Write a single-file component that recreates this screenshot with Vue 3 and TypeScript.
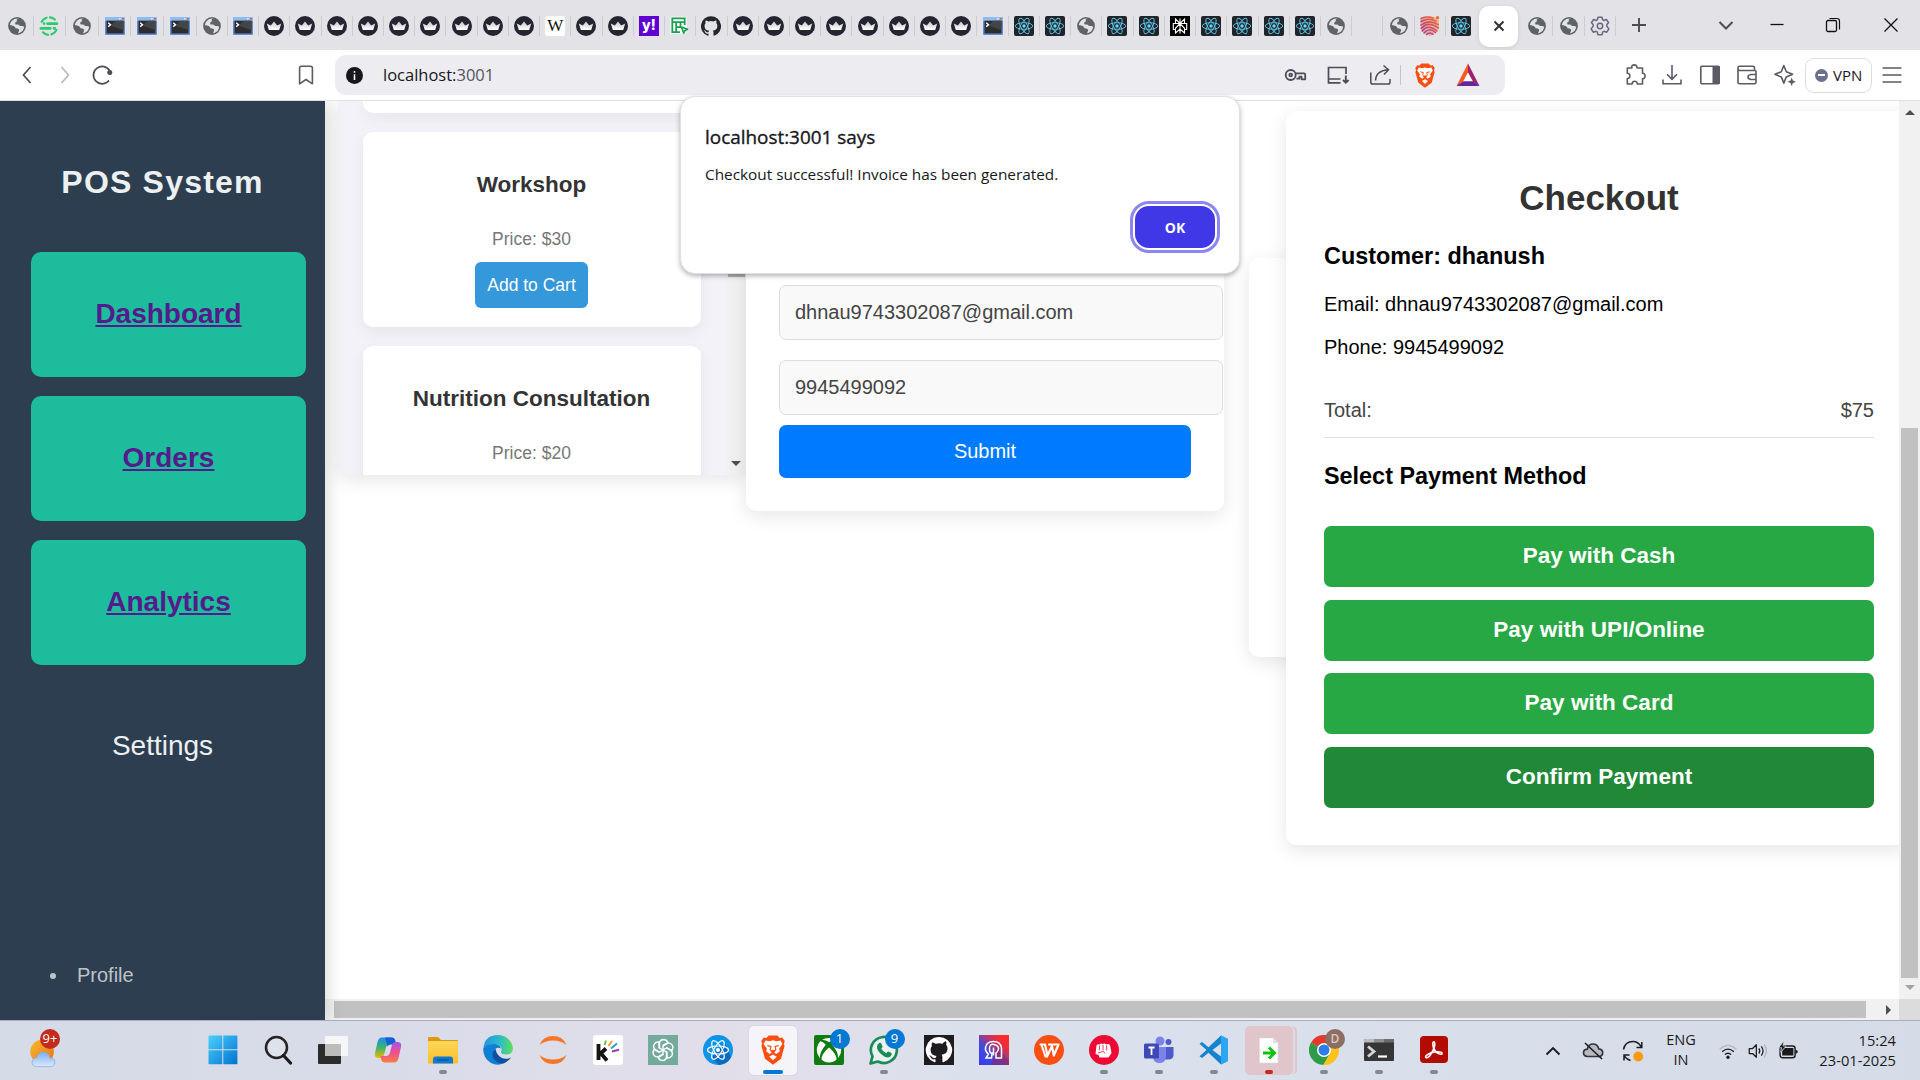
<script setup lang="ts">
type Tab = { icon: string; glyph?: string; active?: boolean; bare?: boolean; wide?: boolean }

const rep = (icon: string, n: number): Tab[] => Array.from({ length: n }, () => ({ icon }))

const tabs: Tab[] = [
  ...['globe', 'sync-green', 'globe', 'console', 'console', 'console'].map((icon) => ({ icon, wide: true })),
  { icon: 'globe' },
  { icon: 'console' },
  ...rep('crown', 9),
  { icon: 'wiki', glyph: 'W' },
  ...rep('crown', 2),
  { icon: 'yahoo', glyph: 'y!' },
  { icon: 'sheet' },
  { icon: 'github' },
  ...rep('crown', 8),
  { icon: 'console' },
  ...rep('react', 2),
  { icon: 'globe' },
  ...rep('react', 2),
  { icon: 'perplexity' },
  ...rep('react', 4),
  { icon: 'globe' },
  { icon: '' },
  { icon: 'globe' },
  { icon: 'finger' },
  { icon: 'react', bare: true },
  { icon: 'tab-close', active: true },
  { icon: 'globe' },
  { icon: 'globe' },
  { icon: 'gear' },
]

const navCards: string[] = ['Dashboard', 'Orders', 'Analytics']

const products = [
  { name: 'Workshop', price: 30, open: true },
  { name: 'Nutrition Consultation', price: 20, open: false },
]

const customer = { name: 'dhanush', email: 'dhnau9743302087@gmail.com', phone: '9945499092' }

const payments: string[] = ['Pay with Cash', 'Pay with UPI/Online', 'Pay with Card']

type TaskApp = { icon: string; dot?: string; badge?: string; state?: string }
const apps: TaskApp[] = [
  { icon: 'windows' },
  { icon: 'search' },
  { icon: 'taskview' },
  { icon: 'copilot' },
  { icon: 'explorer', dot: 'grey' },
  { icon: 'edge' },
  { icon: 'jupyter' },
  { icon: 'kite' },
  { icon: 'gpt' },
  { icon: 'react-blue' },
  { icon: 'brave', dot: 'blue', state: 'focused' },
  { icon: 'xbox', badge: '1' },
  { icon: 'whatsapp', badge: '9', dot: 'grey' },
  { icon: 'github-sq' },
  { icon: 'spiral' },
  { icon: 'wps' },
  { icon: 'fist', dot: 'grey' },
  { icon: 'teams', dot: 'grey' },
  { icon: 'vscode', dot: 'grey' },
  { icon: 'export', dot: 'red', state: 'alert' },
  { icon: 'chrome', dot: 'grey' },
  { icon: 'terminal', dot: 'grey' },
  { icon: 'acrobat', dot: 'grey' },
]
</script>

<template>
  <div class="screen">
    <svg class="sprite" aria-hidden="true">
      <defs>
        <linearGradient id="g-win" x1="0" y1="0" x2="1" y2="1"><stop offset="0" stop-color="#4cd0fb" /><stop offset="1" stop-color="#0072d0" /></linearGradient>
        <linearGradient id="g-cop1" x1="0" y1="0" x2="0" y2="1"><stop offset="0" stop-color="#1a8fe8" /><stop offset=".5" stop-color="#3fb36b" /><stop offset="1" stop-color="#f5b800" /></linearGradient>
        <linearGradient id="g-cop2" x1="0" y1="0" x2="0" y2="1"><stop offset="0" stop-color="#a455ee" /><stop offset=".5" stop-color="#ee4f8d" /><stop offset="1" stop-color="#fb7c43" /></linearGradient>
        <linearGradient id="g-edge" x1="0" y1="0" x2="1" y2="0"><stop offset="0" stop-color="#2393dd" /><stop offset=".55" stop-color="#2bbcc8" /><stop offset="1" stop-color="#5fe05a" /></linearGradient>
        <linearGradient id="g-spiral" x1="0" y1="1" x2="1" y2="0"><stop offset="0" stop-color="#3a37f0" /><stop offset=".35" stop-color="#3f4be0" /><stop offset=".75" stop-color="#f22c35" /><stop offset="1" stop-color="#ff2a2a" /></linearGradient>
        <linearGradient id="g-sun" x1="0" y1="0" x2="1" y2="1"><stop offset="0" stop-color="#f6bb2c" /><stop offset="1" stop-color="#ee6f1c" /></linearGradient>
        <linearGradient id="g-cloud" x1="0" y1="0" x2="0" y2="1"><stop offset="0" stop-color="#7fb0f5" /><stop offset="1" stop-color="#dbe9fc" /></linearGradient>
        <linearGradient id="g-folder" x1="0" y1="0" x2="0" y2="1"><stop offset="0" stop-color="#ffd75e" /><stop offset="1" stop-color="#fbbe27" /></linearGradient>
        <linearGradient id="g-finger" x1="0" y1="1" x2="1" y2="0"><stop offset="0" stop-color="#a8357f" /><stop offset="1" stop-color="#fb6a2a" /></linearGradient>
        <linearGradient id="g-crown" x1="0" y1="0" x2="0" y2="1"><stop offset="0" stop-color="#c9c9cd" /><stop offset="1" stop-color="#fff" /></linearGradient>
      </defs>

      <!-- tab favicons, 20 × 20 -->
      <symbol id="globe" viewBox="0 0 20 20">
        <circle cx="10" cy="10" r="8.9" fill="#5f6368" />
        <path d="M11.500 2.800c-2.300-.4-2.300 1.800-1 2.300-1.600.7-2.300 1-2.300 2.300 0 1.100 1.300 1.300 2.700 1.100 1.300 0 1.500 1.500 2.600 1.600 1.200.2 2.300-.2 3.600.7-.2 3.300-2.900 6.300-6 6.400 .1-1.500 1.400-2.100 1-3.400-.5-1.500-2.700-1.300-4.600-1.600C5.500 11.900 4.300 10.500 2.900 8.900 3.500 5.700 7.300 1.700 11.500 2.800z" fill="#e3e2e7" />
        <path d="M3 9.300c1.800.1 3.600.4 4.800 1.600 1.200 1 .4 2.200.6 3.500 .1 1-.1 1.700-.3 2.300C5 16 2.800 12.800 3 9.300z" fill="#5f6368" />
      </symbol>
      <symbol id="sync-green" viewBox="0 0 20 20">
        <g fill="none" stroke="#2bcb6c" stroke-width="2.200" stroke-linecap="round">
          <path d="M2.700 5.700A8.600 8.600 0 0 1 7.500 1.700M11 1.300a8.600 8.600 0 0 1 4.800 2.200M4 16.300a8.600 8.600 0 0 0 5 2.500M12.500 18.400a8.600 8.600 0 0 0 5-4.500" />
          <path d="M8.500 7.600h9.500M1.800 12.400h9.500M5 7.600h.1M15 12.400h.8" stroke-width="2.600" />
        </g>
      </symbol>
      <symbol id="console" viewBox="0 0 20 20">
        <rect x="0" y="1" width="20" height="18" rx="1" fill="#5b8fd6" />
        <rect x="0" y="1" width="20" height="3.800" fill="#8fbcf0" />
        <rect x="1.500" y="4.700" width="17" height="12.800" fill="#2c2d2e" />
        <path d="M10 4.700h8.500V14L6 10z" fill="#444546" />
        <path d="M3.200 6.800l2.300 1.900-2.300 1.900" fill="none" stroke="#fff" stroke-width="1.400" />
        <rect x="17" y="2" width="1.800" height="1.600" fill="#d95b4b" /><rect x="14" y="2" width="1.500" height="1.500" fill="#dcebff" />
      </symbol>
      <symbol id="crown" viewBox="0 0 20 20">
        <circle cx="10" cy="10" r="10" fill="#242530" />
        <path d="M2.800 7.500l4 2L10 5.400l3.200 4.100 4-2-2 6.600H4.800z" fill="url(#g-crown)" />
      </symbol>
      <symbol id="sheet" viewBox="0 0 20 20">
        <rect x=".5" y=".8" width="16" height="17" rx="1.500" fill="#fff" />
        <path d="M10 16.200H2.300V2.300h12.400V9M2.500 6.200h12M6.200 6.500V16M6.500 11.200H11M10.500 6.500v5" fill="none" stroke="#1ba051" stroke-width="1.800" />
        <path d="M11.500 11l6 2.300-2.500 1.200-1.200 2.700z" fill="#e8fff0" stroke="#1ba051" stroke-width="1.700" stroke-linejoin="round" />
      </symbol>
      <symbol id="github" viewBox="0 0 24 24">
        <path fill="#24262b" d="M12 .3a12 12 0 0 0-3.800 23.400c.6.1.8-.3.800-.6v-2c-3.300.7-4-1.600-4-1.600-.6-1.400-1.400-1.800-1.400-1.800-1-.7.100-.7.100-.7 1.200 0 1.900 1.200 1.900 1.200 1 1.800 2.800 1.300 3.500 1 0-.8.400-1.300.7-1.600-2.700-.3-5.500-1.300-5.500-6 0-1.200.5-2.300 1.300-3.100-.2-.4-.6-1.600 0-3.200 0 0 1-.3 3.400 1.200a11.500 11.500 0 0 1 6 0c2.300-1.500 3.300-1.200 3.300-1.200.6 1.600.2 2.800 0 3.200.9.800 1.300 1.900 1.300 3.200 0 4.600-2.800 5.600-5.500 5.900.5.400.9 1 .9 2.200v3.300c0 .3.100.7.800.6A12 12 0 0 0 12 .3" />
      </symbol>
      <symbol id="react" viewBox="0 0 20 20">
        <rect width="20" height="20" rx="2" fill="#20232a" />
        <g fill="none" stroke="#5fc8e4" stroke-width=".9">
          <ellipse cx="10" cy="10" rx="8.700" ry="3.300" /><ellipse cx="10" cy="10" rx="8.700" ry="3.300" transform="rotate(60 10 10)" /><ellipse cx="10" cy="10" rx="8.700" ry="3.300" transform="rotate(120 10 10)" />
        </g>
        <circle cx="10" cy="10" r="1.700" fill="#61dafb" />
      </symbol>
      <symbol id="perplexity" viewBox="0 0 20 20">
        <rect width="20" height="20" fill="#000" />
        <path d="M10 2.500v15M5.500 3l4.500 4.500L14.500 3v4.500h-9zM5.500 7.500H3.300v6h2.200M14.500 7.500h2.200v6h-2.200M10 7.500l-4.500 4.800v4.700l4.500-4 4.500 4v-4.700z" fill="none" stroke="#fff" stroke-width="1.100" />
      </symbol>
      <symbol id="finger" viewBox="0 0 20 20">
        <path d="M.5 2.500Q7-.5 14 1l5 3.500v7Q18 17 10 20 1 16.500.5 10z" fill="url(#g-finger)" fill-opacity=".35" />
        <g fill="none" stroke="url(#g-finger)" stroke-width="1.500" stroke-linecap="round">
          <path d="M1 2.500q6.500-2.500 12-.5M1 5.500q8-4.500 15-.3M1 9q8-6 17-.5M1.200 12.500Q8 4.500 18.500 12M2.200 15q6-7.500 14.800 0M4 17q5-6 11.500-.5M6.500 18.500q3-3 6.500-.2" />
        </g>
        <circle cx="17.500" cy="1.800" r="1.800" fill="#fb6a2a" />
      </symbol>
      <symbol id="gear" viewBox="0 0 20 20">
        <g fill="none" stroke="#676883" stroke-width="1.500" stroke-linejoin="round">
          <path d="M8 1.200h4l.6 2.500 1.400.8 2.400-1 2.200 3.100-1.700 2v1.800l2 2.500-2.300 3.300-2.600-.9-1.400.8-.6 2.700H8l-.6-2.700-1.400-.8-2.600.9-2.300-3.300 2-2.500V8.600l-1.700-2 2.200-3.100 2.400 1 1.400-.8z" />
          <circle cx="10" cy="10" r="2.700" />
        </g>
      </symbol>
      <symbol id="tab-close" viewBox="0 0 20 20"><path d="M5.500 5.500l9 9M14.500 5.500l-9 9" stroke="#2f3035" stroke-width="2" /></symbol>

      <!-- toolbar glyphs, 24 × 24 -->
      <symbol id="back" viewBox="0 0 24 24"><path d="M15.500 4L8.500 12l7 8" fill="none" stroke="#4b4c55" stroke-width="1.700" /></symbol>
      <symbol id="forward" viewBox="0 0 24 24"><path d="M8.500 4l7 8-7 8" fill="none" stroke="#b9b9bf" stroke-width="1.700" /></symbol>
      <symbol id="reload" viewBox="0 0 24 24"><path d="M18 17.500A8.700 8.700 0 1 1 18.800 8" fill="none" stroke="#4b4c55" stroke-width="1.700" /><circle cx="18.800" cy="9.500" r="2.500" fill="#4b4c55" /></symbol>
      <symbol id="bookmark" viewBox="0 0 24 24"><path d="M5.600 20.800V5q0-1.800 1.800-1.800h9.200q1.800 0 1.800 1.800v15.800L12 16.500z" fill="none" stroke="#5a5b64" stroke-width="1.600" stroke-linejoin="round" /></symbol>
      <symbol id="info" viewBox="0 0 24 24"><circle cx="12" cy="12" r="12" fill="#17171c" /><path d="M12 10.300v8M12 5.500v2.500" stroke="#fff" stroke-width="2.200" /></symbol>
      <symbol id="key" viewBox="0 0 24 24">
        <g fill="none" stroke="#4b4c55" stroke-width="1.800"><circle cx="6.700" cy="12" r="5" /><circle cx="6.700" cy="12" r="1.400" /><path d="M11.500 10.300H20q1.200 0 1.200 1.200v4.800h-3.600v-2.600h-2.200v2h-3" stroke-linejoin="round" /></g>
      </symbol>
      <symbol id="install" viewBox="0 0 24 24">
        <path d="M20 11V4.500H2.500v15.300h12M2.500 16h12" fill="none" stroke="#4b4c55" stroke-width="1.700" /><path d="M19.800 12.500v7M17 17l2.800 2.700 2.800-2.700" fill="none" stroke="#4b4c55" stroke-width="1.900" />
      </symbol>
      <symbol id="share" viewBox="0 0 24 24">
        <path d="M2.800 9.500v9.700q0 1.800 1.800 1.800h15.600q1.800 0 1.800-1.800V16" fill="none" stroke="#4b4c55" stroke-width="1.500" /><path d="M7.500 17.500Q8 8 19.500 6.800M15.500 2.500l5 4.300-4.500 4.800" fill="none" stroke="#4b4c55" stroke-width="1.500" />
      </symbol>
      <symbol id="brave" viewBox="0 0 30 34">
        <path d="M10 .5h10l2.500 2.800 3-.4 2.800 4-1 3 .8 2.500-4 14.500L15 33.800 5.900 26.900l-4-14.500.8-2.500-1-3 2.800-4 3 .4z" fill="#fb4e12" />
        <path d="M6.500 6.200l4.300.9L15 6l4.200 1.100 4.300-.9 2.200 4-3.800 5 .9 3.200-4 3-2.300-1.600 1.500-1.900-3-1.200-3 1.200 1.500 1.900-2.300 1.600-4-3 .9-3.200-3.800-5z" fill="#fff" />
        <path d="M15 22l4.200 2.600L15 28.500l-4.200-3.900z" fill="#fff" />
        <path d="M8.500 12l4.300 1-1 3.200 1.500 2M21.500 12l-4.300 1 1 3.200-1.500 2" fill="none" stroke="#fb4e12" stroke-width="1.300" />
      </symbol>
      <symbol id="bat" viewBox="0 0 24 24">
        <path d="M12 .5L.5 23 8 18.500 12 10z" fill="#fb5a1e" /><path d="M12 .5L23.500 23 16.500 18.500 12 10z" fill="#a02268" /><path d="M.5 23h23L16.500 18H8z" fill="#65259b" /><path d="M12 9.500L7.200 18.300h9.600z" fill="#fff" />
      </symbol>
      <symbol id="puzzle" viewBox="0 0 24 24">
        <path d="M4.300 5h4.600c-1.300-3.600 4.600-4.700 5.300 0h5.300v5.300c3.400-.4 3.400 6 0 5.500v5.200h-5.200c.2-3.600-5.100-3.600-5.200 0H4.300v-5.500c3.500.3 3.400-5.500 0-5.200z" fill="none" stroke="#5a5b64" stroke-width="1.600" stroke-linejoin="round" />
      </symbol>
      <symbol id="download" viewBox="0 0 24 24"><path d="M12 2v14M7 11.300l5 5 5-5M3 16.500v4.200h18V16.500" fill="none" stroke="#5a5b64" stroke-width="1.600" /></symbol>
      <symbol id="panel" viewBox="0 0 24 24"><rect x="2.800" y="3.300" width="18.400" height="17.400" rx="1" fill="none" stroke="#5a5b64" stroke-width="1.600" /><rect x="14.500" y="3" width="7" height="18" fill="#5a5b64" /></symbol>
      <symbol id="wallet" viewBox="0 0 24 24"><path d="M19.500 7.500V4.700q0-1.500-1.500-1.500H4.500Q3 3.200 3 4.700v14.500Q3 20.700 4.500 20.700h15q1.500 0 1.500-1.500V8.500q0-1-1.200-1H4.500Q3 7.300 3 5.800M21 11.500h-5q-3 .5-3 2.500t3 2.500h5" fill="none" stroke="#5a5b64" stroke-width="1.600" /></symbol>
      <symbol id="spark" viewBox="0 0 24 24"><path d="M10.800 2.500l2.500 6.200 6.300 2.600-6.300 2.600-2.500 6.200-2.500-6.200L2 11.300l6.300-2.600z" fill="none" stroke="#5a5b64" stroke-width="1.600" stroke-linejoin="round" /><path d="M18.700 14.500l1.200 3.100 3.100 1.200-3.100 1.200-1.200 3.100-1.200-3.100-3.100-1.200 3.100-1.200z" fill="#5a5b64" /></symbol>
      <symbol id="menu" viewBox="0 0 24 24"><path d="M2.500 5h19M2.500 12h19M2.500 19h19" stroke="#5a5b64" stroke-width="1.700" /></symbol>
      <symbol id="plus" viewBox="0 0 24 24"><path d="M12 5v14M5 12h14" stroke="#4b4c55" stroke-width="1.900" /></symbol>
      <symbol id="chev" viewBox="0 0 24 24"><path d="M5.500 9l6.500 6.500L18.500 9" fill="none" stroke="#4b4c55" stroke-width="2" /></symbol>
      <symbol id="minimize" viewBox="0 0 24 24"><path d="M5.500 11.500h13" stroke="#111" stroke-width="1.300" /></symbol>
      <symbol id="restore" viewBox="0 0 24 24"><rect x="5.500" y="7.500" width="10" height="11" rx="1.500" fill="none" stroke="#111" stroke-width="1.300" /><path d="M8.500 5.500h7.500q2.500 0 2.500 2.500v8.500" fill="none" stroke="#111" stroke-width="1.200" /></symbol>
      <symbol id="close" viewBox="0 0 24 24"><path d="M5.500 5.500l13 13M18.500 5.500l-13 13" stroke="#111" stroke-width="1.300" /></symbol>

      <!-- taskbar icons, 30 × 30 -->
      <symbol id="weather" viewBox="0 0 30 34">
        <circle cx="14" cy="16" r="13" fill="url(#g-sun)" />
        <path d="M8 32.500q-5.500-.5-5-5.500.5-4 5-4.300 1.500-6 7.500-6t7 6q5.500.3 5.500 5t-5 4.800z" fill="url(#g-cloud)" stroke="#7fa9ea" stroke-width=".8" />
      </symbol>
      <symbol id="windows" viewBox="0 0 30 30"><path d="M.5 1.500q0-.9.900-.9h12.900v13.600H.500zM15.300.6h13.200q.9 0 .9.900v12.700H15.300zM.500 15.300h13.800v14H1.400q-.9 0-.9-.9zM15.300 15.300h14.100v13.100q0 .9-.9.900H15.300z" fill="url(#g-win)" /></symbol>
      <symbol id="search" viewBox="0 0 30 30"><circle cx="13.500" cy="12.500" r="10.500" fill="#e3e6ee" fill-opacity=".6" stroke="#242424" stroke-width="2.500" /><path d="M20.500 20.500l7 7.500" stroke="#1b1b1b" stroke-width="3.200" stroke-linecap="round" /></symbol>
      <symbol id="taskview" viewBox="0 0 30 30"><rect x="0" y="9" width="23" height="20" rx="1" fill="#2c2c2c" /><rect x="7" y="1" width="23" height="20" rx="1" fill="#f6f6f6" /><rect x="7" y="9" width="16" height="12" fill="#bcbcbc" /></symbol>
      <symbol id="copilot" viewBox="0 0 30 30">
        <path d="M9 2.500h9q3 0 3.800 3L22.500 9H17q-3 0-4 3.500L11 20q-1 3-4 3H5q-4-.5-3-5L4.500 7Q5.500 2.500 9 2.500z" fill="url(#g-cop1)" />
        <path d="M12 2.500h7q2.500 0 3.300 3L23 9.500h-5q-2.500 0-3.500 2z" fill="#1560d4" />
        <path d="M21 27.500h-9q-3 0-3.800-3L7.500 21H13q3 0 4-3.500L19 10q1-3 4-3h2q4 .5 3 5l-2.500 11q-1 4.500-4.500 4.500z" fill="url(#g-cop2)" />
      </symbol>
      <symbol id="explorer" viewBox="0 0 30 30">
        <path d="M0 3q0-1 1-1h9l3 3h16q1 0 1 1v5H0z" fill="#dc9a08" /><rect y="6" width="30" height="22.500" rx="1" fill="url(#g-folder)" />
        <path d="M5 28.500v-4q0-3 3-3h14q3 0 3 3v4z" fill="#0f78d2" /><path d="M9 25h12" stroke="#0b4f94" stroke-width="1.200" />
      </symbol>
      <symbol id="edge" viewBox="0 0 30 30">
        <path d="M15 0a15 15 0 0 1 15 13q-.3 6.500-6.500 6.500-5.500 0-5.500-2.500 0-1 .8-2.200Q18.500 10 13 9 4.500 8.500.3 14.500 1 0 15 0z" fill="url(#g-edge)" />
        <path d="M.2 14Q4 8.500 12 9q5.500.8 6 4.800-2.600-2.300-5.500 0Q8.500 18 12 23.300q3.500 4.500 9.500 4.600Q14.500 31.500 8 28 .2 23.500.2 14z" fill="#0f7fd6" />
        <path d="M12.500 13.800Q7.500 18.500 11 24q4 5.500 10.500 4 4-1.700 6.500-5.500-5 2.500-9.500.3-5-2.600-6-9z" fill="#0b51a0" />
      </symbol>
      <symbol id="jupyter" viewBox="0 0 30 30"><path d="M1.500 10Q5 1 15 1t13.500 9Q23 5.500 15 5.500T1.500 10zM1.500 20Q5 29 15 29t13.500-9q-5.500 4.500-13.500 4.500T1.500 20z" fill="#f37726" /></symbol>
      <symbol id="kite" viewBox="0 0 30 30">
        <rect width="30" height="30" rx="3" fill="#fff" /><path d="M5.500 9v16M6 20l7-6.500M7.500 18l6.500 7.500" stroke="#151515" stroke-width="3.800" fill="none" />
        <path d="M11.500 10L13 5.500" stroke="#72bf44" stroke-width="2" /><path d="M15.500 11L19 6" stroke="#f5a623" stroke-width="2" /><path d="M18 13.500l6-5" stroke="#2d9cdb" stroke-width="2" /><path d="M19 16.500l7-1.800" stroke="#9b3ba5" stroke-width="2" />
      </symbol>
      <symbol id="gpt" viewBox="0 0 30 30">
        <rect width="30" height="30" fill="#74aa9c" />
        <g fill="none" stroke="#fff" stroke-width="1.400">
          <path v-for="n in 6" :key="n" :transform="`rotate(${n * 60} 15 15)`" d="M11.500 13V8.200Q12 4.500 15.700 4.500q3 .2 4.200 3L15 10.500v5.500" />
        </g>
      </symbol>
      <symbol id="react-blue" viewBox="0 0 30 30">
        <circle cx="15" cy="15" r="15" fill="#0b94e8" /><path d="M22 8l6 14.500A15 15 0 0 1 16 30L8 22z" fill="#0a6cc0" />
        <g fill="none" stroke="#fff" stroke-width="1.200"><ellipse cx="15" cy="15" rx="10.500" ry="4" /><ellipse cx="15" cy="15" rx="10.500" ry="4" transform="rotate(60 15 15)" /><ellipse cx="15" cy="15" rx="10.500" ry="4" transform="rotate(120 15 15)" /></g><circle cx="15" cy="15" r="2" fill="#fff" />
      </symbol>
      <symbol id="xbox" viewBox="0 0 30 30">
        <rect width="30" height="30" rx="2" fill="#107c10" />
        <path d="M15 3q4.500 0 7 2Q19 4.500 15 7 11 4.500 8 5q2.500-2 7-2z" fill="#fff" />
        <path d="M6.300 6.300Q9 6.500 11.800 9.800 5.500 17 6 23.200 2.800 19.500 2.800 15.500q0-5.500 3.500-9.200zM23.700 6.300Q21 6.500 18.200 9.800 24.500 17 24 23.200q3.200-3.700 3.200-7.700 0-5.500-3.500-9.200z" fill="#fff" />
        <path d="M15 12.500Q23 19.500 22.500 24.500 19.500 27.500 15 27.500t-7.500-3Q7 19.500 15 12.500z" fill="#fff" />
      </symbol>
      <symbol id="whatsapp" viewBox="0 0 30 30">
        <path d="M1.500 28.500l2-7.200A13 13 0 1 1 8.800 26.500z" fill="#e9f2ef" stroke="#1b8a57" stroke-width="2.700" stroke-linejoin="round" />
        <path d="M10.500 7.800q1.400-.4 2 1.200l1 2.500q.2.800-1.200 2.200 1.700 3.200 5 4.500 1.300-1.800 2-1.600l3 1.500q.8.500.2 2-1 2.200-3.500 2.300-3 0-7-3.500T8 12q0-3 2.500-4.200z" fill="#1b8a57" />
      </symbol>
      <symbol id="github-sq" viewBox="0 0 30 30">
        <rect width="30" height="30" fill="#1e1c1f" />
        <path fill="#fff" d="M15 2a13 13 0 0 0-4.500 25.300c.8.200 1-.3 1-.7v-2.300c-3.700.7-4.500-1.500-4.500-1.500-1-2-2-2.300-2-2.300 2-.5 3 1.300 3 1.300 1.200 2 3 1.400 3.700 1 .1-.9.500-1.500.9-1.800-3-.4-6-1.500-6-6.500 0-1.400.5-2.600 1.400-3.500-.2-.4-.6-1.700.1-3.500 0 0 1.100-.4 3.600 1.300a12.600 12.600 0 0 1 6.600 0C20.800 5.800 22 6.200 22 6.200c.7 1.800.2 3.100.1 3.500.8.900 1.400 2.100 1.400 3.500 0 5-3.100 6.100-6 6.500.5.400.9 1.200.9 2.400v4.500c0 .4.300.9 1 .7A13 13 0 0 0 15 2z" />
      </symbol>
      <symbol id="spiral" viewBox="0 0 30 30">
        <rect width="30" height="30" fill="url(#g-spiral)" /><path d="M18 12l12 14v4H12z" fill="#8c2560" fill-opacity=".6" />
        <path d="M12.500 23H7l2.500-4Q6 16.500 6.500 12.500 7.500 6.500 14.500 6.500T22.500 13v10H17v-5q2.500-1.500 2.500-4.500T15 9.500t-4.500 4 2.500 4.500zM14.500 12.500v8" fill="none" stroke="#fff" stroke-width="1.500" />
      </symbol>
      <symbol id="wps" viewBox="0 0 30 30"><circle cx="15" cy="15" r="15" fill="#fb4e14" /><path d="M6.500 9.500H11l2.500 11 4.500-9.500 1.800 9.500 4.700-11h-9.500" fill="none" stroke="#fff" stroke-width="2.200" stroke-linejoin="round" stroke-linecap="round" /><path d="M7.500 10l4 11.500h2.500" fill="none" stroke="#fff" stroke-width="2" /></symbol>
      <symbol id="fist" viewBox="0 0 30 30">
        <circle cx="15" cy="15" r="15" fill="#ed0a34" />
        <path d="M7.500 10.500q1.200-2 3-.8 1.200-2 3.300-.5 1.500-1.700 3.500.2 2-1.200 3.700.6L22.500 18l-3 4.500H10.500L9.500 20 6.500 19z" fill="#fff" />
        <path d="M10.700 10.500l-.5 5M14 10v5.500M17.500 10.500l.3 5M9 17.800l5.500-1.300 1.500 2" stroke="#ed0a34" stroke-width=".8" fill="none" />
      </symbol>
      <symbol id="teams" viewBox="0 0 30 30">
        <circle cx="24.500" cy="7" r="3" fill="#5059c9" /><path d="M20 12h9.500v8.500q-.5 4-5 4H20z" fill="#5059c9" /><circle cx="16" cy="6" r="4.500" fill="#7b83eb" /><path d="M9 12h13v10q-.5 6-6.500 6T9 22z" fill="#7b83eb" />
        <rect x="0" y="8.500" width="15" height="15" rx="1.500" fill="#3f48b4" /><path d="M4.500 12.500h6M7.500 12.500v7.500" stroke="#fff" stroke-width="1.800" />
      </symbol>
      <symbol id="vscode" viewBox="0 0 30 30"><path d="M22 .5L29 4v22l-7 3.500L9.500 17.700 3 23l-2.500-1.700L7.500 15 .5 8.700 3 7l6.500 5.300zM22 8.500L13.500 15l8.500 6.500z" fill="#1583cf" fill-rule="evenodd" /><path d="M22 .5L29 4v22l-7 3.500z" fill="#2aa6f2" /></symbol>
      <symbol id="export" viewBox="0 0 30 30"><path d="M5.500 3H19l5 5v20H5.500z" fill="#fff" stroke="#d9dce4" stroke-width=".6" /><path d="M19 3v5h5" fill="#dfe3e6" /><path d="M9 18h10M15 12.500l5.500 5.500-5.500 5.500" fill="none" stroke="#0ec30e" stroke-width="3" /></symbol>
      <symbol id="chrome" viewBox="0 0 30 30">
        <path d="M15 15L2 7.500A15 15 0 0 1 28 7.500z" fill="#e5392d" /><path d="M15 15L2 7.500A15 15 0 0 0 15 30l6-11.500z" fill="#2f9a48" /><path d="M15 15h0L28 7.500A15 15 0 0 1 14 30l7-11.500z" fill="#fcc31c" />
        <circle cx="15" cy="15" r="7" fill="#fff" /><circle cx="15" cy="15" r="5.500" fill="#2b7de9" />
      </symbol>
      <symbol id="terminal" viewBox="0 0 30 30"><rect y="4" width="30" height="22" rx="1" fill="#363636" /><path d="M0 5q0-1 1-1h9v3.500H0z" fill="#bbb" /><path d="M10 4h10v3.500H10z" fill="#8f8f8f" /><path d="M20 4h9q1 0 1 1v2.500H20z" fill="#6b6b6b" /><path d="M4 11.500l6 5-6 5" fill="none" stroke="#d6d6d6" stroke-width="2.800" /><path d="M14 21.500h9" stroke="#fff" stroke-width="2.200" /></symbol>
      <symbol id="acrobat" viewBox="0 0 30 30"><rect x="1" y="1" width="28" height="27" rx="4" fill="#b30b00" /><path d="M7 22.500q-1.500-1 2-3.200 3-1.800 7-2.300 6-.6 7 1 .3 2-3 .8-4-1.700-5.500-6Q13 7.500 14.500 7t1.200 3.500Q14.500 16 11 20.500 8.500 23.500 7 22.500z" fill="none" stroke="#fff" stroke-width="1.600" /></symbol>

      <!-- tray glyphs, 24 × 24 -->
      <symbol id="tray-up" viewBox="0 0 24 24"><path d="M5.500 15.500L12 9l6.500 6.500" fill="none" stroke="#1b1b1b" stroke-width="1.900" /></symbol>
      <symbol id="cloud-off" viewBox="0 0 24 24"><path d="M6.500 17.500q-4-.3-4-3.700t3.800-3.700Q7.500 5 12 5t5.700 4.800q4 .4 4 3.900t-4 3.800z" fill="#b7bac3" stroke="#33343a" stroke-width="1.700" /><path d="M4 4l17 16" stroke="#1b1b1b" stroke-width="1.600" /></symbol>
      <symbol id="sync" viewBox="0 0 24 24"><path d="M2.500 10.500Q4 2.500 12 2.500q5 0 8 5M20.800 3v5.500h-5.300M3 21.500V16H8.500M3.500 17q2 3.500 6 4.500" fill="none" stroke="#1b1b1b" stroke-width="1.500" /><circle cx="17.200" cy="17.500" r="5" fill="#fb9a0c" /></symbol>
      <symbol id="wifi" viewBox="0 0 24 24"><g fill="none" stroke-width="1.700"><path d="M2 10Q12 .5 22 10" stroke="#b4b6c0" /><path d="M5 13q7-6.500 14 0M8.200 16.200q3.800-3.200 7.600 0" stroke="#1b1b1b" /></g><circle cx="12" cy="19.500" r="2" fill="#1b1b1b" /></symbol>
      <symbol id="volume" viewBox="0 0 24 24"><path d="M1.500 9h4L10 4.500v15L5.500 15h-4z" fill="none" stroke="#1b1b1b" stroke-width="1.500" stroke-linejoin="round" /><path d="M13 9q2.300 3 0 6M16 6.500q4.200 5.500 0 11" fill="none" stroke="#1b1b1b" stroke-width="1.500" /><path d="M19.300 4q5.500 8 0 16" fill="none" stroke="#adb0bb" stroke-width="1.400" /></symbol>
      <symbol id="battery" viewBox="0 0 24 24"><rect x="2.500" y="6" width="18" height="14" rx="3" fill="none" stroke="#1b1b1b" stroke-width="1.700" /><path d="M5 12l3-3.500h10.500v9H5z" fill="#1b1b1b" /><path d="M21 10.500v5q2.800-.5 2.800-2.500T21 10.500z" fill="#1b1b1b" /><path d="M7 0L.8 8h3.500L3 13.500 9.800 6H6z" fill="#1b1b1b" stroke="#d8dce7" stroke-width=".8" /></symbol>
    </svg>

    <header class="tabstrip">
      <div v-for="(t, i) in tabs" :key="i" class="tab" :class="{ wide: t.wide, active: t.active, bare: t.bare }">
        <span class="tab-face">
          <span v-if="t.glyph" class="letter" :class="t.icon">{{ t.glyph }}</span>
          <svg v-else-if="t.icon" class="fav"><use :href="'#' + t.icon" /></svg>
        </span>
      </div>
      <svg class="ic plus"><use href="#plus" /></svg>
      <div class="win">
        <svg class="ic"><use href="#chev" /></svg>
        <svg class="ic"><use href="#minimize" /></svg>
        <svg class="ic"><use href="#restore" /></svg>
        <svg class="ic"><use href="#close" /></svg>
      </div>
    </header>

    <div class="toolbar">
      <div class="nav-left">
        <svg class="ic"><use href="#back" /></svg>
        <svg class="ic"><use href="#forward" /></svg>
        <svg class="ic"><use href="#reload" /></svg>
      </div>
      <svg class="ic mark"><use href="#bookmark" /></svg>
      <div class="address">
        <svg class="info"><use href="#info" /></svg>
        <span class="url">localhost:<i>3001</i></span>
        <div class="addr-icons">
          <svg class="ic"><use href="#key" /></svg>
          <svg class="ic"><use href="#install" /></svg>
          <svg class="ic"><use href="#share" /></svg>
        </div>
        <span class="bar"></span>
        <svg class="lion"><use href="#brave" /></svg>
        <svg class="ic bat"><use href="#bat" /></svg>
      </div>
      <div class="tools">
        <svg v-for="n in ['puzzle', 'download', 'panel', 'wallet', 'spark']" :key="n" class="ic"><use :href="'#' + n" /></svg>
      </div>
      <div class="vpn"><span class="vpn-dot"></span><span class="vpn-text">VPN</span></div>
      <svg class="ic menu"><use href="#menu" /></svg>
    </div>

    <div class="page">
      <aside class="sidebar">
        <h2 class="brand">POS System</h2>
        <nav class="nav">
          <div v-for="n in navCards" :key="n" class="nav-card"><a>{{ n }}</a></div>
        </nav>
        <div class="settings">Settings</div>
        <div class="profile"><span class="bullet"></span><span>Profile</span></div>
      </aside>

      <div class="scroller">
        <div class="row">
          <main class="board">
            <section class="products">
              <div class="product-list">
                <article class="product tail"></article>
                <article v-for="p in products" :key="p.name" class="product">
                  <h3>{{ p.name }}</h3>
                  <p>Price: ${{ p.price }}</p>
                  <button v-if="p.open">Add to Cart</button>
                </article>
              </div>
              <div class="mini-scroll"><span class="mini-thumb"></span><span class="tri down"></span></div>
            </section>

            <section class="form">
              <div class="field">{{ customer.email }}</div>
              <div class="field">{{ customer.phone }}</div>
              <button class="submit">Submit</button>
            </section>

            <section class="cart"></section>

            <section class="checkout">
              <h2>Checkout</h2>
              <h3>Customer: {{ customer.name }}</h3>
              <p class="email">Email: {{ customer.email }}</p>
              <p class="phone">Phone: {{ customer.phone }}</p>
              <div class="total"><span>Total:</span><span>$75</span></div>
              <h3 class="select">Select Payment Method</h3>
              <div class="pays">
                <button v-for="p in payments" :key="p">{{ p }}</button>
                <button class="confirm">Confirm Payment</button>
              </div>
            </section>
          </main>
          <div class="vbar">
            <span class="tri up"></span>
            <span class="vthumb"></span>
            <span class="tri down dim"></span>
          </div>
        </div>
        <div class="hbar"><span class="hthumb"></span><span class="tri right"></span><span class="corner"></span></div>
      </div>
    </div>

    <footer class="taskbar">
      <div class="weather"><svg class="w-ic"><use href="#weather" /></svg><span class="w-badge">9+</span></div>
      <div class="apps">
        <div v-for="a in apps" :key="a.icon" class="app">
          <div class="app-face" :class="a.state">
            <svg class="app-ic"><use :href="'#' + a.icon" /></svg>
            <span v-if="a.dot" class="dot" :class="a.dot"></span>
            <span v-if="a.badge" class="badge">{{ a.badge }}</span>
            <span v-if="a.icon === 'chrome'" class="badge user">D</span>
          </div>
        </div>
      </div>
      <div class="tray">
        <svg class="ic"><use href="#tray-up" /></svg>
        <svg class="ic cloud"><use href="#cloud-off" /></svg>
        <svg class="ic sync"><use href="#sync" /></svg>
        <div class="lang"><span>ENG</span><span>IN</span></div>
        <svg class="ts wifi"><use href="#wifi" /></svg>
        <svg class="ts"><use href="#volume" /></svg>
        <svg class="ts"><use href="#battery" /></svg>
        <div class="clock"><span class="time">15:24</span><span class="date">23-01-2025</span></div>
      </div>
    </footer>

    <div class="dialog">
      <div class="dlg-title">localhost:3001 says</div>
      <div class="dlg-msg">Checkout successful! Invoice has been generated.</div>
      <button class="ok">OK</button>
    </div>
  </div>
</template>

<style>
body { margin: 0; overflow: hidden; background: #fff; }
</style>

<style scoped>
* { box-sizing: border-box; }
h2, h3, p { margin: 0; }
button { border: 0; padding: 0; font-family: inherit; color: #fff; display: block; }
svg { display: block; flex: none; }
.sprite { position: absolute; width: 0; height: 0; }
.screen { width: 1920px; height: 1080px; position: relative; overflow: hidden; display: flex; flex-direction: column; font-family: "Liberation Sans", Arial, sans-serif; background: #fff; }
.ic { width: 24px; height: 24px; }

.tabstrip { height: 50px; flex: none; background: #e3e2e7; display: flex; align-items: center; padding-left: 1px; }
.tab { width: 31.240px; height: 50px; flex: none; display: flex; align-items: center; justify-content: center; background: linear-gradient(#cdccd2, #cdccd2) no-repeat right 16px / 1px 20px; padding: 2px 1px 0 0; }
.tab.wide { width: 32.600px; }
.tab.bare { background: none; }
.tab.active { width: 45px; background: none; }
.tab-face { display: flex; align-items: center; justify-content: center; }
.tab.active .tab-face { width: 39px; height: 41px; background: #fff; border-radius: 10px; margin-right: 1px; box-shadow: 0 1px 4px rgba(0, 0, 0, .1); }
.fav { width: 20px; height: 20px; }
.letter { width: 20px; height: 20px; line-height: 20px; text-align: center; white-space: nowrap; }
.letter.wiki { background: #fff; border-radius: 3px; font-family: "Liberation Serif", serif; font-size: 17px; color: #111; }
.letter.yahoo { background: #5f01d1; font-family: Inter, sans-serif; font-weight: 800; font-size: 14px; line-height: 18px; color: #fff; }
.plus { margin-left: 11px; }
.win { margin-left: auto; display: flex; padding-right: 17px; }
.win .ic { margin-left: 32px; }
.win .ic:nth-child(2) { margin-left: 27px; }
.win .ic:nth-child(4) { margin-left: 34px; }

.toolbar { height: 51px; flex: none; display: flex; align-items: center; border-bottom: 1px solid #e1e0e5; background: #fff; }
.nav-left { display: flex; gap: 14px; padding-left: 15px; }
.mark { margin-left: 179px; }
.address { margin-left: 17px; width: 1170px; height: 40px; border-radius: 11px; background: #edecf1; display: flex; align-items: center; flex: none; }
.info { width: 17px; height: 17px; margin-left: 11px; }
.url { margin-left: 20px; font: 16.500px/40px "Open Sans", "Noto Sans", sans-serif; color: #17171c; width: 130px; }
.url i { font-style: normal; color: #55555e; }
.addr-icons { margin-left: auto; display: flex; gap: 18px; }
.bar { width: 1px; height: 20px; background: #c4c3ca; margin-left: 8px; }
.lion { width: 22px; height: 27px; margin-left: 13px; }
.bat { margin-left: 20px; margin-right: 25px; }
.tools { display: flex; gap: 13.500px; margin-left: 117.500px; }
.vpn { width: 67px; height: 35px; border: 1px solid #dddce1; border-radius: 9px; margin-left: 8.500px; display: flex; align-items: center; }
.vpn-dot { width: 13px; height: 13px; border-radius: 50%; background: linear-gradient(#fff, #fff) center / 7px 2px no-repeat #6d6f8f; margin-left: 9px; }
.vpn-text { font: 15px/33px "Open Sans", "Noto Sans", sans-serif; color: #17171c; margin-left: 5px; }
.menu { margin-left: 8px; }

.page { height: 919px; flex: none; display: flex; }
.sidebar { width: 325px; flex: none; background: #2d3e50; display: flex; flex-direction: column; position: relative; z-index: 3; box-shadow: 4px 0 15px rgba(0, 0, 0, .13); clip-path: inset(0 -40px 0 0); }
.brand { margin-top: 61px; height: 40px; line-height: 40px; font-size: 32px; letter-spacing: 1.200px; text-align: center; color: #ecf0f1; }
.nav { margin: 50px 19px 0 31px; display: flex; flex-direction: column; gap: 19px; }
.nav-card { height: 125px; border-radius: 10px; background: #1cbc9c; display: flex; align-items: center; justify-content: center; padding-bottom: 2px; }
.nav-card a { font-size: 28px; font-weight: 700; color: #551a8b; text-decoration: underline; }
.settings { margin-top: 19px; height: 124px; line-height: 124px; font-size: 28px; text-align: center; color: #ecf0f1; }
.profile { margin-top: 155px; display: flex; align-items: center; height: 24px; padding-left: 50px; color: #bdc3c7; font-size: 20px; }
.bullet { width: 6px; height: 6px; border-radius: 50%; background: #bdc3c7; margin: 2px 21px 0 0; }

.scroller { width: 1595px; display: flex; flex-direction: column; }
.row { height: 898px; display: flex; }
.board { width: 1574px; height: 898px; flex: none; overflow: hidden; display: flex; align-items: flex-start; padding-left: 13px; background: #fff; }
.products { width: 408px; height: 374px; flex: none; border-radius: 0 0 0 10px; background: #f2f2f8; display: flex; overflow: hidden; box-shadow: 0 5px 19px rgba(0, 0, 0, .1); }
.product-list { width: 388px; height: 374px; overflow: hidden; padding: 0 25px; display: flex; flex-direction: column; }
.product { height: 195px; flex: none; margin-bottom: 19px; border-radius: 10px; background: #fff; box-shadow: 0 5px 15px rgba(0, 0, 0, .06); display: flex; flex-direction: column; align-items: center; padding-right: 1px; }
.product.tail { height: 12px; border-radius: 0 0 10px 10px; }
.product h3 { margin-top: 38px; height: 30px; line-height: 30px; font-size: 22.500px; color: #333; }
.product p { margin-top: 27px; height: 24px; line-height: 24px; font-size: 17.500px; color: #777; }
.product button { margin-top: 11px; width: 113px; height: 46px; border-radius: 6px; background: #3498db; font-size: 17.500px; }
.mini-scroll { width: 20px; background: #f1f1f1; display: flex; flex-direction: column; align-items: center; }
.mini-thumb { width: 17px; height: 176px; background: #b5b5b5; }
.mini-scroll .tri { margin-top: 184px; }

.form { width: 478px; height: 410px; flex: none; border-radius: 0 0 10px 10px; background: #fff; box-shadow: 0 5px 19px rgba(0, 0, 0, .1); padding: 184px 0 0 33px; z-index: 1; }
.field { width: 444px; height: 55px; border: 1px solid #ddd; border-radius: 7px; background: #f9f9f9; line-height: 53px; padding-left: 15px; font-size: 20px; color: #444; margin-bottom: 20px; }
.submit { width: 412px; height: 53px; margin-top: -10px; border-radius: 7px; background: #007bff; font-size: 20px; }
.cart { width: 200px; height: 399px; flex: none; margin: 157px 0 0 25px; border-radius: 10px; background: #fff; box-shadow: 0 5px 19px rgba(0, 0, 0, .1); }
.checkout { width: 625px; height: 734px; flex: none; margin: 10px 0 0 -163px; border-radius: 10px; background: #fff; box-shadow: 0 5px 19px rgba(0, 0, 0, .1); padding: 67px 37px 0 38px; z-index: 1; color: #000; }
.checkout h2 { height: 40px; line-height: 40px; font-size: 35px; text-align: center; color: #333; }
.checkout h3 { height: 30px; line-height: 30px; font-size: 23.400px; margin-top: 23px; }
.checkout p { font-size: 20px; line-height: 24px; }
.checkout .email { margin-top: 21px; }
.checkout .phone { margin-top: 19px; }
.total { margin-top: 39px; display: flex; justify-content: space-between; font-size: 20px; line-height: 24px; padding-bottom: 15px; border-bottom: 1px solid #ddd; color: #444; }
.pays { margin-top: 35px; display: flex; flex-direction: column; gap: 12.600px; }
.pays button { height: 61px; border-radius: 7px; background: #28a745; font-size: 22.500px; font-weight: 700; padding-bottom: 1px; }
.pays .confirm { background: #218838; }

.vbar { width: 21px; height: 898px; background: #f1f1f1; display: flex; flex-direction: column; align-items: center; }
.vbar .up { margin-top: 9px; }
.vthumb { margin-top: 313px; width: 17px; height: 550px; background: #c1c1c1; }
.vbar .down { margin-top: 7px; }
.tri { width: 0; height: 0; border: 5px solid transparent; flex: none; }
.tri.up { border-top: 0; border-bottom-color: #505050; }
.tri.down { border-bottom: 0; border-top-color: #505050; }
.tri.dim { border-top-color: #a3a3a3; }
.tri.right { border-right: 0; border-left-color: #505050; }
.hbar { height: 21px; background: #f1f1f1; display: flex; align-items: center; }
.hthumb { margin-left: 9px; width: 1532px; height: 17px; background: #c1c1c1; }
.hbar .tri { margin-left: 20px; }
.corner { width: 21px; height: 21px; background: #dcdcdc; margin-left: auto; }

.taskbar { height: 60px; flex: none; border-top: 1px solid #aaacb9; background: linear-gradient(90deg, #d6dbe8 0%, #d8dbe8 18%, #dfdeea 32%, #e2deea 40%, #dbe1ec 50%, #d9e0ec 68%, #d5dce8 100%); display: flex; align-items: center; font-family: "Open Sans", "Noto Sans", sans-serif; position: relative; z-index: 4; }
.weather { width: 32px; height: 40px; margin-left: 28px; position: relative; }
.w-ic { width: 30px; height: 31px; margin-top: 6px; }
.w-badge { position: absolute; left: 12px; top: -2px; width: 20px; height: 20px; border-radius: 50%; background: #c42b1c; color: #fff; font-size: 13px; line-height: 19px; text-align: center; }
.apps { display: flex; margin-left: 135.500px; }
.app { width: 55.050px; display: flex; justify-content: center; }
.app-face { width: 48px; height: 49px; border-radius: 5px; display: flex; flex-direction: column; align-items: center; position: relative; padding-top: 9px; }
.app-face.focused { background: rgba(255, 255, 255, .65); box-shadow: 0 0 0 1px rgba(0, 0, 0, .03); }
.app-face.alert { background: #e0c5cb; box-shadow: 3px 0 0 -1px #d8dce7, 5px 0 0 -1px #e0c5cb; }
.app-ic { width: 30px; height: 30px; }
.dot { width: 8px; height: 4px; border-radius: 2px; background: #85878f; margin-top: 5px; }
.dot.blue { width: 20px; background: #0078d4; }
.dot.red { background: #c42b1c; }
.badge { position: absolute; left: 25px; top: 3px; width: 20px; height: 20px; border-radius: 50%; background: #0078d4; color: #fff; font-size: 13px; line-height: 19px; text-align: center; }
.badge.user { background: #8d6e63; color: #d9c9c2; font-size: 12px; font-weight: 600; }
.tray { margin-left: auto; display: flex; align-items: center; padding-right: 24px; color: #1b1b1b; }
.cloud { margin-left: 16px; }
.sync { margin-left: 16px; }
.lang { width: 50px; margin-left: 11px; display: flex; flex-direction: column; align-items: center; font-size: 14.500px; line-height: 20px; padding-bottom: 2px; }
.ts { width: 20px; height: 24px; margin-left: 10px; }
.ts.wifi { margin-left: 12px; }
.clock { width: 98px; display: flex; flex-direction: column; align-items: flex-end; font-size: 14.700px; line-height: 20px; white-space: nowrap; padding-bottom: 2px; }

.dialog { position: absolute; left: 680px; top: 96px; width: 560px; height: 178px; border: 1px solid #e0dfe8; border-radius: 15px; background: #fff; box-shadow: 0 2px 5px rgba(0, 0, 0, .3); z-index: 10; padding: 26px 24px 0; display: flex; flex-direction: column; font-family: "Open Sans", "Noto Sans", sans-serif; color: #17171c; white-space: nowrap; }
.dlg-title { font-size: 18.900px; font-weight: 500; line-height: 28px; -webkit-text-stroke: .35px #17171c; }
.dlg-msg { font-size: 15.350px; line-height: 22px; margin-top: 12px; }
.ok { align-self: flex-end; width: 80px; height: 42px; margin-top: 21px; border-radius: 14px; background: #4038e6; font-size: 14px; font-weight: 700; outline: 3px solid #8b86f0; outline-offset: 2px; }
</style>
